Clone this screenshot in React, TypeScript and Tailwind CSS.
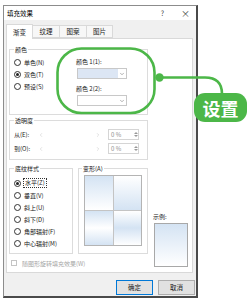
import { ChevronDown, ChevronLeft, ChevronRight } from "lucide-react";

function Radio({ label, checked, focus }: { label: string; checked?: boolean; focus?: boolean }) {
  return (
    <div className="flex h-[12px] items-center gap-[3px]">
      <span className="flex h-[7px] w-[7px] items-center justify-center rounded-full border border-[#333] bg-white">
        {checked && <span className="h-[3px] w-[3px] rounded-full bg-[#222]" />}
      </span>
      <span className={focus ? "px-[1px] leading-[8px] outline outline-1 outline-dotted outline-[#333]" : ""}>{label}</span>
    </div>
  );
}

function Combo({ filled }: { filled?: boolean }) {
  return (
    <div className="ml-[1px] flex h-[11px] w-[50px] border border-[#c8c8c8] bg-white">
      <div className={filled ? "flex-1 bg-[#dce6f4]" : "flex-1"} />
      <div className="flex w-[8px] items-center justify-center">
        <ChevronDown size={6} color="#666" strokeWidth={2} />
      </div>
    </div>
  );
}

function SliderRow({ label }: { label: string }) {
  return (
    <div className="flex h-[11px] items-center">
      <span className="w-[21px]">{label}</span>
      <div className="flex w-[69px] items-center justify-between px-[3px]">
        <ChevronLeft size={6} color="#c4c4c4" strokeWidth={2} />
        <ChevronRight size={6} color="#c4c4c4" strokeWidth={2} />
      </div>
      <div className="ml-[4px] flex h-[11px] w-[31px] border border-[#d5d5d5]">
        <span className="flex-1 pl-[2px] leading-[9px] text-[#8a8a8a]">0 %</span>
        <div className="flex w-[5px] flex-col items-center justify-center gap-[1px]">
          <span className="h-0 w-0 border-x-[2px] border-b-[2px] border-x-transparent border-b-[#999]" />
          <span className="h-0 w-0 border-x-[2px] border-t-[2px] border-x-transparent border-t-[#999]" />
        </div>
      </div>
    </div>
  );
}

export default function App() {
  const blue = "#d4e3f3";
  return (
    <div className="relative h-[300px] w-[252px] overflow-hidden bg-white font-['Noto_Sans_CJK_SC','Liberation_Sans',sans-serif] text-[6px] leading-[9px] text-[#1a1a1a]">
      <div className="ml-[3px] mt-[5px] flex h-[293px] w-[195px] flex-col border-l border-t border-[#8c8c8c] border-b-2 border-r-2 border-b-[#4a4a4a] border-r-[#4a4a4a] bg-[#f0f0f0]">
        {/* title bar */}
        <div className="flex h-[14px] items-center bg-white pl-[3px] pr-[6px]">
          <span className="flex-1 text-[6.5px] text-black">填充效果</span>
          <span className="mr-[17px] text-[7px] text-[#444]">?</span>
          <span className="text-[9px] text-[#444]">×</span>
        </div>

        {/* tabs */}
        <div className="ml-[2px] mt-[4px] flex h-[14px] items-end text-[6.5px]">
          <div className="relative z-10 -mb-px flex h-[15px] w-[27px] items-center justify-center border border-b-0 border-[#d9d9d9] bg-white">渐变</div>
          <div className="flex h-[13px] w-[27px] items-center justify-center border border-l-0 border-[#d9d9d9] bg-[#f7f7f7]">纹理</div>
          <div className="flex h-[13px] w-[27px] items-center justify-center border border-l-0 border-[#d9d9d9] bg-[#f7f7f7]">图案</div>
          <div className="flex h-[13px] w-[26px] items-center justify-center border border-l-0 border-[#d9d9d9] bg-[#f7f7f7]">图片</div>
        </div>

        {/* panel */}
        <div className="ml-[2px] flex h-[235px] w-[187px] border border-[#d9d9d9] bg-white pl-[2px] pt-[6px]">
          <div className="flex w-[139px] flex-col">
            <fieldset className="flex h-[70px] border border-[#dcdcdc] pl-[4px] pt-[2px]">
              <legend className="px-[1px]">颜色</legend>
              <div className="flex w-[62px] flex-col">
                <Radio label="单色(N)" />
                <Radio label="双色(T)" checked />
                <Radio label="预设(S)" />
              </div>
              <div className="flex flex-col pt-[2px]">
                <span className="h-[8px] leading-[8px]">颜色 1(1):</span>
                <div className="mt-[2px]"><Combo filled /></div>
                <span className="mt-[6px] h-[8px] leading-[8px]">颜色 2(2):</span>
                <div className="mt-[2px]"><Combo /></div>
              </div>
            </fieldset>

            <fieldset className="mt-[1px] flex h-[44px] flex-col gap-[3px] border border-[#dcdcdc] pl-[4px] pt-[4px]">
              <legend className="px-[1px]">透明度</legend>
              <SliderRow label="从(E):" />
              <SliderRow label="到(O):" />
            </fieldset>

            <div className="mt-[4px] flex gap-[5px]">
              <fieldset className="flex h-[90px] w-[64px] flex-col border border-[#dcdcdc] pl-[4px] pt-[4px]">
                <legend className="px-[1px]">底纹样式</legend>
                <Radio label="水平(Z)" checked focus />
                <Radio label="垂直(V)" />
                <Radio label="斜上(U)" />
                <Radio label="斜下(D)" />
                <Radio label="角部辐射(F)" />
                <Radio label="中心辐射(M)" />
              </fieldset>
              <fieldset className="h-[90px] w-[70px] border border-[#dcdcdc] pl-[3px] pt-[2px]">
                <legend className="px-[1px]">变形(A)</legend>
                <div className="ml-[2px] grid h-[71px] w-[58px] grid-cols-2 grid-rows-2 gap-[1px] border border-[#b4b4b4] bg-[#c4c4c4]">
                  <div className="bg-gradient-to-b from-[#d4e3f3] to-white" />
                  <div className="bg-gradient-to-b from-white to-[#d4e3f3]" />
                  <div className="bg-gradient-to-b from-[#d4e3f3] via-white to-[#d4e3f3]" />
                  <div className="bg-gradient-to-b from-white via-[#d4e3f3] to-white" />
                </div>
              </fieldset>
            </div>

            <div className="mt-[4px] flex h-[10px] items-center gap-[5px] pl-[2px] text-[#a6a6a6]">
              <span className="h-[6px] w-[6px] border border-[#c4c4c4] bg-white" />
              <span>随图形旋转填充效果(W)</span>
            </div>
          </div>

          <div className="ml-[5px] flex flex-col justify-end pb-[5px]">
            <span>示例:</span>
            <div
              className="ml-[1px] mt-[2px] h-[44px] w-[34px] border border-[#a8a8a8]"
              style={{ background: `linear-gradient(to bottom, ${blue}, #ffffff)` }}
            />
          </div>
        </div>

        {/* buttons */}
        <div className="mt-[7px] flex justify-end gap-[5px] pr-[1px] text-[6.5px]">
          <button className="flex h-[15px] w-[37px] items-center justify-center border border-[#0078d7] bg-[#e1e1e1]">确定</button>
          <button className="flex h-[15px] w-[37px] items-center justify-center border border-[#adadad] bg-[#e1e1e1]">取消</button>
        </div>
      </div>

      {/* annotation overlay */}
      <svg className="pointer-events-none absolute inset-0" width="252" height="300" viewBox="0 0 252 300">
        <rect x="57.5" y="48.5" width="97" height="64.5" rx="24" fill="none" stroke="#4cb748" strokeWidth="2.6" />
        <path d="M158 77.5 H205 Q222 77.5 222 94" fill="none" stroke="#4cb748" strokeWidth="2.6" />
        <circle cx="159.5" cy="77.5" r="4.2" fill="#4cb748" />
      </svg>
      <div className="absolute left-[194px] top-[93px] flex h-[29px] w-[53px] items-center justify-center rounded-[11px] bg-[#4cb748] text-[18px] font-bold leading-[20px] text-white">
        设置
      </div>
    </div>
  );
}
